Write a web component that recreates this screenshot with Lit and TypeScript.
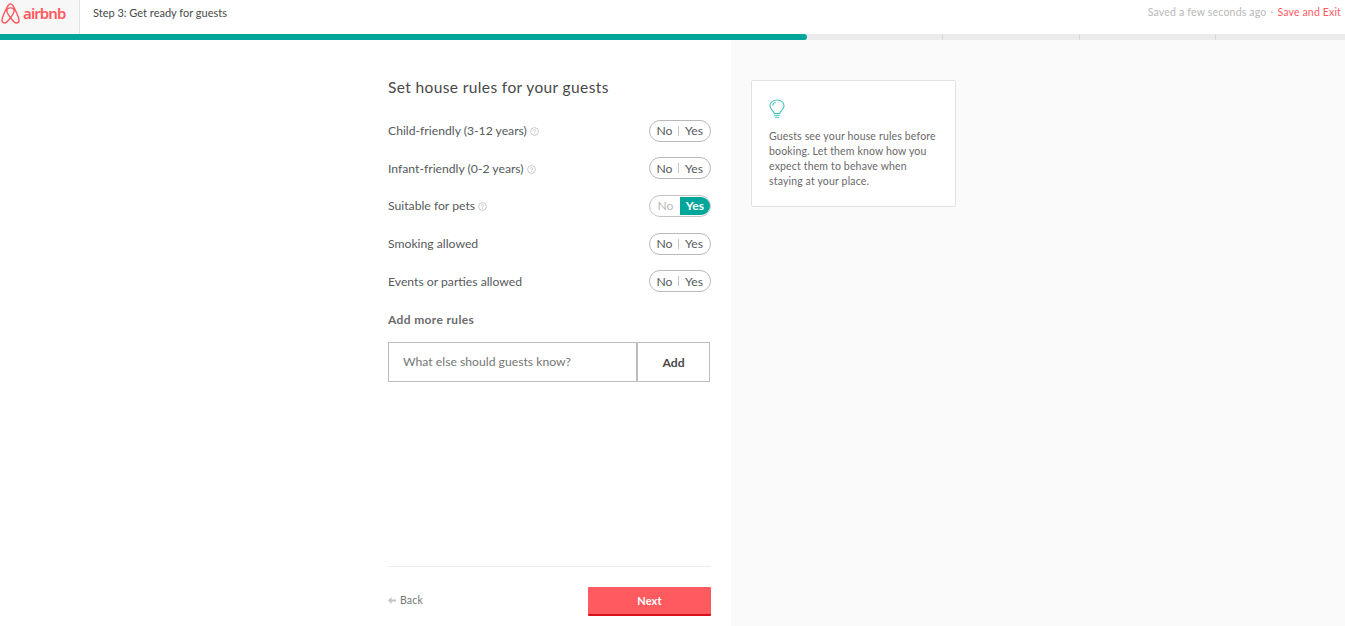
import { LitElement, html, css, svg } from "lit";
import { customElement } from "lit/decorators.js";

const rules: { label: string; help: boolean; on?: boolean }[] = [
  { label: "Child-friendly (3-12 years)", help: true },
  { label: "Infant-friendly (0-2 years)", help: true },
  { label: "Suitable for pets", help: true, on: true },
  { label: "Smoking allowed", help: false },
  { label: "Events or parties allowed", help: false },
];

const logo = svg`<svg class="mark" width="19" height="21" viewBox="0 0 20 22" fill="none" stroke="#ff5a5f" stroke-width="1.5" stroke-linejoin="round" stroke-linecap="round"><path d="M10 15.5C7.6 12.4 6.2 10 6.2 8.2C6.2 6.2 7.8 5.1 10 5.1C12.2 5.1 13.8 6.2 13.8 8.2C13.8 10 12.4 12.4 10 15.5C7.6 18.7 5.6 21 3.9 21C2.2 21 1 19.7 1 18C1 16.4 1.6 14.8 3.2 11.2C4.8 7.6 6.4 4.2 7.6 2.4C8.3 1.4 9 1 10 1C11 1 11.7 1.4 12.4 2.4C13.6 4.2 15.2 7.6 16.8 11.2C18.4 14.8 19 16.4 19 18C19 19.7 17.8 21 16.1 21C14.4 21 12.4 18.7 10 15.5Z"/></svg>`;

const bulb = svg`<svg width="16" height="20" viewBox="0 0 17 21" fill="none" stroke="#3dc2b8" stroke-width="1.15" stroke-linecap="round"><path d="M5.6 15.2C5.2 12.8 1 11 1 7.1C1 3.5 4.3 1 8.5 1C12.7 1 16 3.5 16 7.1C16 11 11.8 12.8 11.4 15.2Z"/><path d="M6 17.2H11M6.6 19.2H10.4"/><path d="M4 6.6C4.2 5 5.2 4 6.6 3.6"/></svg>`;

const help = svg`<svg class="help" width="9" height="9" viewBox="0 0 9 9" fill="none" stroke="#b4b4b4" stroke-width="0.7"><circle cx="4.5" cy="4.5" r="3.9"/><path d="M3.3 3.6C3.4 2.9 3.9 2.6 4.5 2.6C5.2 2.6 5.7 3 5.7 3.6C5.7 4.4 4.5 4.4 4.5 5.3M4.5 6V6.7"/></svg>`;

@customElement("app-root")
export class AppRoot extends LitElement {
  static styles = css`
    :host {
      display: block;
      font-family: Lato, "Liberation Sans", sans-serif;
      color: #565a5c;
    }
    * { box-sizing: border-box; }
    .page { display: flex; flex-direction: column; height: 626px; background: #fff; overflow: hidden; }
    .header { display: flex; align-items: center; height: 34px; flex: none; }
    .brand {
      display: flex; align-items: center; gap: 3px; width: 80px; height: 34px;
      padding: 0 0 8px 1px; background: #f7f7f7; border-right: 1px solid #e4e4e4;
    }
    .word { font-family: "Noto Sans", sans-serif; font-size: 15px; font-weight: 600; color: #ff5a5f; letter-spacing: -0.9px; line-height: 1; }
    .step { margin-left: 13px; padding-bottom: 9px; font-size: 11px; color: #484848; flex: 1; }
    .saved { display: flex; padding: 0 4px 10px 0; font-size: 10.5px; color: #b8b8b8; letter-spacing: 0.2px; }
    .saved i { font-style: normal; margin: 0 4px; }
    .saved a { color: #ff5a5f; letter-spacing: 0.16px; }
    .progress { display: flex; height: 6px; flex: none; background: #ebebeb; }
    .fill { width: 807px; background: #00a699; border-radius: 0 3px 3px 0; }
    .tick { width: 1px; background: #d8d8d8; }
    .t1 { margin-left: 135px; }
    .t2 { margin-left: 136px; }
    .t3 { margin-left: 135px; }
    .main { flex: 1; display: flex; min-height: 0; }
    .left { width: 731px; flex: none; padding: 37px 20px 10px 388px; display: flex; flex-direction: column; }
    .right { flex: 1; background: #fafafa; padding: 40px 0 0 20px; }
    h1 { margin: 0 0 22.7px; font-size: 15.5px; font-weight: 400; line-height: 20px; letter-spacing: 0.38px; color: #484848; }
    .rows { display: flex; flex-direction: column; gap: 15.65px; }
    .row { display: flex; align-items: center; justify-content: space-between; height: 22px; }
    .label { font-size: 12.2px; color: #565a5c; display: flex; align-items: center; gap: 3px; }
    .help { margin-top: 2px; }
    .toggle {
      display: flex; align-items: center; width: 62px; height: 22px; padding: 1px;
      border: 1px solid #b9b9b9; border-radius: 11px; font-size: 12.2px; color: #565a5c;
    }
    .toggle span { display: flex; align-items: center; justify-content: center; height: 18px; }
    .no { width: 27px; }
    .yes { flex: 1; }
    .sep { width: 1px; height: 10px !important; background: #c4c4c4; }
    .toggle.on { padding: 1px 0 1px 1px; border-color: #c4c4c4; }
    .toggle.on .no { color: #b8b8b8; width: 29px; }
    .toggle.on .sep { display: none; }
    .toggle.on .yes { background: #00a699; color: #fff; font-weight: 700; border-radius: 0 9px 9px 0; }
    h2 { margin: 20px 0 14px; font-size: 12px; font-weight: 700; line-height: 16px; color: #6b6b6b; letter-spacing: 0.35px; }
    .add { display: flex; height: 40px; width: 322px; }
    .input {
      flex: 1; display: flex; align-items: center; padding: 0 0 1px 14px; font-size: 12.2px; color: #767676;
      border: 1px solid #bdbdbd; border-right: 0;
    }
    .btn {
      width: 74px; display: flex; align-items: center; justify-content: center; font-size: 12.2px;
      font-weight: 700; color: #484848; border: 1px solid #bdbdbd; border-left-width: 2px;
    }
    .foot { margin-top: auto; border-top: 1px solid #ebebeb; display: flex; justify-content: space-between; padding-top: 20px; }
    .back { display: flex; align-items: center; gap: 4px; height: 26px; font-size: 10.5px; color: #767676; letter-spacing: 0.15px; }
    .next {
      width: 123px; height: 29px; display: flex; align-items: center; justify-content: center;
      background: #ff5a5f; border-bottom: 2px solid #d8121a; border-radius: 1px; color: #fff;
      font-size: 11px; font-weight: 700; letter-spacing: 0.1px;
    }
    .card {
      width: 205px; height: 127px; background: #fff; border: 1px solid #e2e2e2; border-radius: 2px;
      padding: 18px 17px 0 17px;
    }
    .card svg { display: block; margin-bottom: 10px; }
    .card p { margin: 0; font-size: 10.5px; line-height: 15.1px; color: #696969; letter-spacing: 0.16px; white-space: nowrap; }
  `;

  render() {
    return html`<div class="page">
      <div class="header">
        <div class="brand">${logo}<span class="word">airbnb</span></div>
        <div class="step">Step 3: Get ready for guests</div>
        <div class="saved">Saved a few seconds ago<i>·</i><a>Save and Exit</a></div>
      </div>
      <div class="progress">
        <div class="fill"></div>
        <div class="tick t1"></div><div class="tick t2"></div><div class="tick t3"></div>
      </div>
      <div class="main">
        <div class="left">
          <h1>Set house rules for your guests</h1>
          <div class="rows">
            ${rules.map(
              (r) => html`<div class="row">
                <div class="label">${r.label}${r.help ? help : ""}</div>
                <div class="toggle ${r.on ? "on" : ""}"><span class="no">No</span><span class="sep"></span><span class="yes">Yes</span></div>
              </div>`
            )}
          </div>
          <h2>Add more rules</h2>
          <div class="add">
            <div class="input">What else should guests know?</div>
            <div class="btn">Add</div>
          </div>
          <div class="foot">
            <div class="back">
              <svg width="8" height="7" viewBox="0 0 8 7" fill="#c4c4c4"><path d="M0 3.5L3.5 0V2.5H8V4.5H3.5V7Z"/></svg>
              Back
            </div>
            <div class="next">Next</div>
          </div>
        </div>
        <div class="right">
          <div class="card">
            ${bulb}
            <p>Guests see your house rules before<br />booking. Let them know how you<br />expect them to behave when<br />staying at your place.</p>
          </div>
        </div>
      </div>
    </div>`;
  }
}
